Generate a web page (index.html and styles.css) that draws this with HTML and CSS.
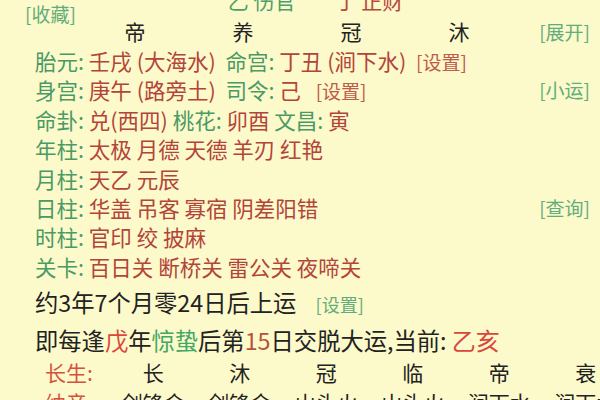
FILE: index.html
```html
<!DOCTYPE html>
<html lang="zh-CN">
<head>
  <meta charset="UTF-8" />
  <meta name="viewport" content="width=device-width, initial-scale=1.0"/>
  <title>排盘</title>
  <link rel="stylesheet" href="styles.css">
</head>
<body>

<div class="page">
    <!-- 顶部: 收藏 / 十神 -->
    <div class="top">
        <span class="tag fav">[收藏]</span>
        <span class="shen">
            <span class="g">乙 伤官</span>
            <span class="r">丁 正财</span>
        </span>
    </div>

    <div class="row head">
        <div class="stars">
            <span>帝</span><span>养</span><span>冠</span><span>沐</span>
        </div>
        <span class="tag">[展开]</span>
    </div>

    <div class="row">
        <div><span class="k">胎元:</span> <span class="v">壬戌 (大海水)</span> <span class="k wide">命宫:</span> <span class="v">丁丑 (涧下水)</span> <span class="tag red wide">[设置]</span></div>
    </div>
    <div class="row">
        <div><span class="k">身宫:</span> <span class="v">庚午 (路旁土)</span> <span class="k wide">司令:</span> <span class="v">己</span> <span class="tag red wider">[设置]</span></div>
        <span class="tag">[小运]</span>
    </div>
    <div class="row">
        <div><span class="k">命卦:</span> <span class="v">兑(西四)</span> <span class="k">桃花:</span> <span class="v">卯酉</span> <span class="k">文昌:</span> <span class="v">寅</span></div>
    </div>
    <div class="row">
        <div><span class="k">年柱:</span> <span class="v">太极 月德 天德 羊刃 红艳</span></div>
    </div>
    <div class="row">
        <div><span class="k">月柱:</span> <span class="v">天乙 元辰</span></div>
    </div>
    <div class="row">
        <div><span class="k">日柱:</span> <span class="v">华盖 吊客 寡宿 阴差阳错</span></div>
        <span class="tag">[查询]</span>
    </div>
    <div class="row">
        <div><span class="k">时柱:</span> <span class="v">官印 绞 披麻</span></div>
    </div>
    <div class="row">
        <div><span class="k">关卡:</span> <span class="v">百日关 断桥关 雷公关 夜啼关</span></div>
    </div>

    <div class="line first">约3年7个月零24日后上运 <span class="tag small">[设置]</span></div>
    <div class="line">即每逢<span class="hl-red">戊</span>年<span class="hl-green">惊蛰</span>后第<span class="hl-num">15</span>日交脱大运,当前: <span class="cur">乙亥</span></div>

    <div class="yun">
        <span class="lbl">长生:</span>
        <span>长</span><span>沐</span><span>冠</span><span>临</span><span>帝</span><span>衰</span>
        <span class="lbl">纳音:</span>
        <span>剑锋金</span><span>剑锋金</span><span>山头火</span><span>山头火</span><span>涧下水</span><span>涧下水</span>
    </div>
</div>

</body>
</html>
```

FILE: styles.css
```css
body {
    font-family: "Noto Sans CJK SC", "Noto Sans", sans-serif;
    background-color: #fcf9cb;
    color: #222;
    margin: 0;
    padding: 0;
    overflow: hidden;
}

.page {
    width: 600px;
    height: 400px;
    padding: 0 10px 0 35px;
    box-sizing: border-box;
    overflow: hidden;
    font-size: 21.5px;
}

.top {
    display: flex;
    height: 17px;
    align-items: flex-start;
}

.fav {
    margin-left: -10px;
    margin-top: 3px;
    line-height: 22px;
}

.shen {
    display: flex;
    gap: 40px;
    margin-left: 152px;
    margin-top: -12px;
    line-height: 24px;
    font-size: 21px;
}

.g {
    color: #4f9f6c;
}

.r {
    color: #b6483c;
}

.row {
    display: flex;
    justify-content: space-between;
    align-items: center;
    height: 29.4px;
    line-height: 29.4px;
    white-space: nowrap;
}

.head {
    height: 29px;
    font-size: 21px;
}

.stars {
    display: grid;
    grid-template-columns: repeat(4, 108px);
    margin-left: 46px;
    text-align: center;
}

.k {
    color: #4a9a66;
}

.v {
    color: #b3443a;
}

.wide {
    margin-left: 5px;
}

.wider {
    margin-left: 10px;
}

.tag {
    color: #62ad7c;
    font-size: 19px;
}

.tag.red {
    color: #bf5b4c;
}

.tag.small {
    font-size: 18px;
    margin-left: 14px;
}

.line {
    font-size: 23.3px;
    line-height: 36px;
    white-space: nowrap;
}

.line.first {
    margin-top: 3px;
}

.hl-red {
    color: #d9493a;
}

.hl-green {
    color: #42a865;
}

.hl-num {
    color: #b5543c;
}

.cur {
    color: #d9473b;
    font-size: 24px;
}

.yun {
    display: grid;
    grid-template-columns: 75px repeat(6, 86.5px);
    grid-auto-rows: 30px;
    line-height: 30px;
    margin-top: -1px;
    font-size: 21px;
    white-space: nowrap;
}

.yun span {
    text-align: center;
}

.yun .lbl {
    text-align: left;
    padding-left: 10px;
    color: #d6503c;
}
```
